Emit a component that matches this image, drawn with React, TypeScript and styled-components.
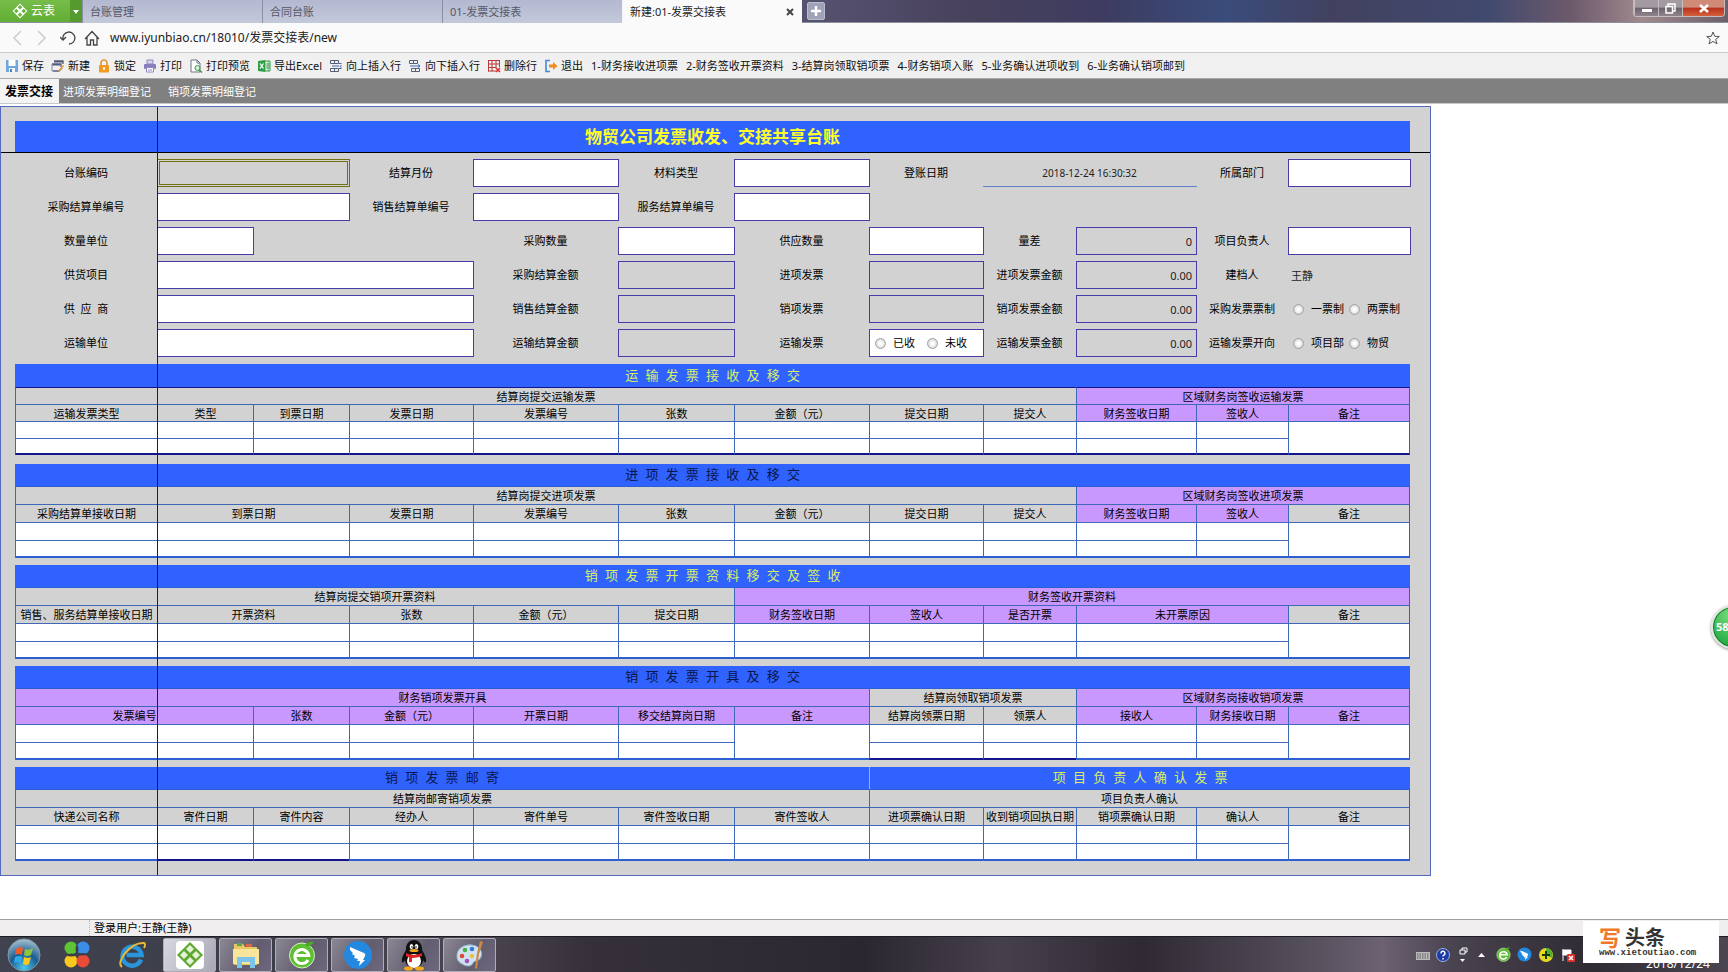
import React from "react";
import styled, { createGlobalStyle, css } from "styled-components";

const GlobalStyle = createGlobalStyle`
  * { box-sizing: border-box; }
  body {
    margin: 0;
    background: #fff;
    color: #000;
    font: 11px/16px "Noto Sans", "Noto Sans CJK SC", sans-serif;
  }
  button, input { font: inherit; color: inherit; }
  button { padding: 0; border: 0; background: none; white-space: nowrap; }
`;

const color = {
  band: "#2f62ff",
  sheet: "#d2d2d2",
  violet: "#c898ff",
  grid: "#4068b8",
  field: "#453ca8",
  edge: "#2e5fd0",
  navy: "#14148c",
};

/* ---------- window chrome ---------- */

const Page = styled.div`
  position: relative;
  display: flex;
  flex-direction: column;
  min-height: 100vh;
  overflow-x: hidden;
`;

const TitleBar = styled.header`
  display: flex;
  height: 23px;
  background: linear-gradient(90deg, #7d7aa0 0%, #54506e 48%, #48415c 56%, #3d3c60 64%, #3a4c7c 71%, #42415f 77%, #40496e 86%, #6d5a6c 91%, #a08a8e 95%, #6b5f68 100%);
  border-bottom: 1px solid #8d8f9c;
`;

const Brand = styled.button`
  display: flex;
  align-items: center;
  gap: 3px;
  width: 70px;
  padding-left: 12px;
  background: linear-gradient(#76bd49, #62ad35);
  color: #fff;
  font-size: 12px;
`;

const BrandMenu = styled.button`
  width: 12px;
  background: #559a2d;
  color: #fff;
  font-size: 8px;
`;

const Tabs = styled.nav`
  display: flex;
`;

const Tab = styled.button<{ $active?: boolean }>`
  display: flex;
  align-items: center;
  justify-content: space-between;
  width: 180px;
  height: 23px;
  padding: 0 8px 0 7px;
  border-left: 1px solid ${(p) => (p.$active ? "#f4f4f8" : "#8c8ea8")};
  background: ${(p) => (p.$active ? "#fafafa" : "linear-gradient(#b4b8d0, #c3c9da)")};
  color: ${(p) => (p.$active ? "#222" : "#555866")};
`;

const NewTab = styled.button`
  display: flex;
  align-items: center;
  justify-content: center;
  width: 18px;
  height: 18px;
  margin: 2px 5px;
  border: 1px solid #b9bccb;
  border-radius: 2px;
  background: #9fa2b8;
`;

const WindowButtons = styled.div`
  display: flex;
  height: 17px;
  margin-left: auto;
  margin-right: 3px;
  border: 1px solid #c4bcc0;
  border-top: 0;
  border-radius: 0 0 4px 4px;
  overflow: hidden;
`;

const WindowButton = styled.button<{ $close?: boolean }>`
  display: flex;
  align-items: center;
  justify-content: center;
  width: ${(p) => (p.$close ? 42 : 24)}px;
  border-left: 1px solid #c4bcc0;
  background: ${(p) =>
    p.$close ? "linear-gradient(#d08a78 45%, #b8301c 50%, #d4603c)" : "linear-gradient(#a39aa2 45%, #6c626c 50%, #90848c)"};
`;

const AddressBar = styled.div`
  display: flex;
  align-items: center;
  height: 30px;
  padding: 0 8px 0 12px;
  background: #fafafa;
  border-bottom: 1px solid #ccc;
`;

const NavButton = styled.button`
  display: flex;
  align-items: center;
  justify-content: center;
  width: 24px;
  height: 24px;
`;

const Address = styled.input`
  flex: 1;
  padding: 0 0 0 2px;
  border: 0;
  outline: 0;
  background: none;
  color: #222;
  font-size: 12px;
`;

const Toolbar = styled.div`
  display: flex;
  align-items: center;
  gap: 8px;
  height: 26px;
  padding: 1px 5px 0;
  background: #f0f0f0;
  border-bottom: 1px solid #a8a8a8;
`;

const ToolGroup = styled.div`
  display: flex;
  gap: 7px;
`;

const Tool = styled.button`
  display: flex;
  align-items: center;
  gap: 3px;
  color: #111;
  svg { flex: none; }
`;

const SheetTabs = styled.nav`
  display: flex;
  height: 25px;
  background: #808080;
  border-bottom: 1px solid #c8c8c8;
`;

const SheetTab = styled.button<{ $active?: boolean }>`
  height: 24px;
  color: #fff;
  padding: 2px 12px 0 4px;
  ${(p) =>
    p.$active &&
    css`
      padding: 2px 6px 0 5px;
      background: #f4f4f4;
      color: #000;
      font-size: 12px;
      font-weight: bold;
    `}
  & + & { min-width: 105px; text-align: left; }
`;

/* ---------- sheet ---------- */

const Workspace = styled.main`
  flex: 1;
  padding-top: 2px;
`;

const Sheet = styled.div`
  position: relative;
  width: max-content;
  padding-bottom: 7px;
  background: ${color.sheet};
  border: 1px solid #5568c0;
`;

const FreezeLine = styled.i`
  position: absolute;
  top: 0;
  bottom: 0;
  left: 156px;
  width: 1px;
  background: #1c1c3c;
`;

const SheetTitle = styled.div`
  padding: 14px 20px 0 14px;
  border-bottom: 1px solid #000;
`;

const SheetHeading = styled.h1`
  margin: 0;
  background: ${color.band};
  color: #ffff28;
  font-size: 17px;
  line-height: 31px;
  text-align: center;
`;

const SheetBody = styled.div`
  padding: 6px 20px 0 14px;
`;

const Form = styled.form`
  display: grid;
  grid-template-columns: 142px 96px 96px 124px 145px 116px 135px 114px 93px 120px 92px 122px;
  grid-auto-rows: 28px;
  row-gap: 6px;
  align-items: center;
  margin-bottom: 7px;
`;

const place = css<{ $row: number; $col: number; $span?: number }>`
  grid-row: ${(p) => p.$row};
  grid-column: ${(p) => p.$col} / span ${(p) => p.$span || 1};
`;

const Label = styled.label<{ $row: number; $col: number }>`
  ${place}
  text-align: center;
  white-space: pre;
`;

type FieldLook = "open" | "locked" | "current" | "underline" | "plain";

const looks: Record<FieldLook, ReturnType<typeof css>> = {
  open: css`background: #fff; border: 1px solid ${color.field};`,
  locked: css`background: none; border: 1px solid ${color.field}; text-align: right;`,
  current: css`background: none; border: 3px double #6f7012;`,
  underline: css`background: none; border: 0; border-bottom: 1px solid #5c80cc; text-align: center; font-size: 10px;`,
  plain: css`background: none; border: 0;`,
};

const Field = styled.input<{ $row: number; $col: number; $span?: number; $look: FieldLook }>`
  ${place}
  width: calc(100% + 1px);
  height: 28px;
  min-width: 0;
  padding: 0 4px 0 3px;
  border-radius: 0;
  outline: 0;
  color: #222;
  ${(p) => looks[p.$look]}
`;

const Choices = styled.div<{ $row: number; $col: number; $boxed?: boolean }>`
  ${place}
  display: flex;
  align-items: center;
  gap: ${(p) => (p.$boxed ? 12 : 5)}px;
  height: 28px;
  margin-right: -1px;
  padding-left: 5px;
  ${(p) => p.$boxed && looks.open}
`;

const Choice = styled.label`
  display: flex;
  align-items: center;
  gap: 7px;
  white-space: nowrap;
`;

const Radio = styled.input`
  appearance: none;
  width: 11px;
  height: 11px;
  margin: 0;
  border: 1px solid #a2a2a2;
  border-radius: 50%;
  background: radial-gradient(#fff 20%, #c4c4c4);
`;

/* ---------- tables ---------- */

const Grid = styled.table<{ $compact?: boolean }>`
  width: 0;
  min-width: 100%;
  margin-bottom: ${(p) => (p.$compact ? 9 : 7)}px;
  table-layout: fixed;
  border-spacing: 0;
  --band: ${(p) => (p.$compact ? 23 : 22)}px;
  --row: ${(p) => (p.$compact ? 17 : 18)}px;
  --edge: ${(p) => (p.$compact ? color.navy : color.edge)};
`;

const BandCell = styled.th<{ $dark?: boolean }>`
  height: var(--band);
  padding: 0;
  background: ${color.band};
  color: ${(p) => (p.$dark ? "#0a1648" : "#dcf060")};
  font: 13px/20px "Liberation Sans", "Noto Sans CJK SC", sans-serif;
  white-space: pre;
  & + & { border-left: 1px solid #9ab0f0; }
`;

const cellLines = css`
  height: var(--row);
  padding: 0;
  border-top: 1px solid ${color.grid};
  border-left: 1px solid ${color.grid};
  line-height: 15px;
`;

const HeadCell = styled.th<{ $violet?: boolean }>`
  ${cellLines}
  background: ${(p) => (p.$violet ? color.violet : color.sheet)};
  font-weight: normal;
  white-space: nowrap;
  &:last-child { border-right: 1px solid ${color.edge}; }
`;

const GroupCell = styled(HeadCell)`
  border-top-color: var(--edge);
`;

const DataCell = styled.td<{ $bottom?: boolean; $right?: boolean; $strong?: boolean }>`
  ${cellLines}
  background: #fff;
  ${(p) => p.$bottom && css`border-bottom: 2px solid ${p.$strong ? color.navy : "var(--edge)"};`}
  ${(p) => p.$right && css`border-right: 1px solid ${color.edge};`}
`;

/* ---------- status bar and task bar ---------- */

const StatusBar = styled.footer`
  display: flex;
  align-items: center;
  height: 17px;
  padding-left: 89px;
  background: #f0eeee;
  border-top: 1px solid #a0a0a0;
`;

const StatusText = styled.span`
  padding-left: 4px;
  border-left: 1px dotted #bbb;
`;

const TaskBar = styled.nav`
  display: flex;
  align-items: center;
  height: 36px;
  border-top: 1px solid #1c1c22;
  background: linear-gradient(90deg, #40434f 0%, #3c3d49 15%, #4a454f 28%, #35303a 34%, #2b2730 50%, #46404c 58%, #2e2933 66%, #57505d 76%, #6c6272 80%, #4a4350 84%, #2f2b33 92%, #4b4650 100%);
`;

const Launchers = styled.div`
  display: flex;
  align-items: center;
  gap: 18px;
  width: 163px;
  padding-left: 6px;
`;

const Launcher = styled.button`
  display: flex;
  width: 36px;
  justify-content: center;
`;

const Windows = styled.div`
  display: flex;
  gap: 3px;
`;

const TaskButton = styled.button<{ $active?: boolean }>`
  display: flex;
  align-items: center;
  justify-content: center;
  width: 53px;
  height: 34px;
  border: 1px solid #b0acb8;
  border-radius: 2px;
  background: ${(p) =>
    p.$active ? "linear-gradient(120deg, #d8d8e0, #a8a8b6)" : "linear-gradient(120deg, #8c8794, #625d6e 60%, #6e6880)"};
`;

const Tray = styled.div`
  display: flex;
  align-items: center;
  align-self: stretch;
  gap: 6px;
  margin-left: auto;
`;

const Clock = styled.time`
  align-self: flex-end;
  width: 76px;
  margin-right: 12px;
  margin-left: 58px;
  color: #fff;
  font-size: 12px;
  line-height: 16px;
  text-align: center;
`;

const Watermark = styled.a`
  position: absolute;
  right: 9px;
  bottom: 9px;
  width: 136px;
  height: 42px;
  padding: 6px 0 0 16px;
  background: #fff;
  color: #333;
  text-decoration: none;
`;

const WatermarkName = styled.strong`
  display: flex;
  align-items: center;
  gap: 4px;
  height: 21px;
  font-size: 20px;
  font-weight: 700;
  line-height: 21px;
`;

const WatermarkLead = styled.span`
  color: #f07828;
  font-size: 22px;
`;

const WatermarkSite = styled.span`
  display: block;
  font: bold 9px/10px "Liberation Mono", monospace;
`;

const SpeedBall = styled.button`
  position: absolute;
  top: 605px;
  right: -27px;
  width: 44px;
  height: 44px;
  padding-left: 3px;
  border: 2px solid #dfe6df;
  border-radius: 50%;
  background: radial-gradient(circle at 50% 20%, #7fe07f, #2fb24b 70%, #1f9a3c);
  box-shadow: 0 1px 3px #888, inset 0 0 0 1px #157a2c;
  color: #fff;
  font-size: 11px;
  font-weight: bold;
  text-align: left;
`;

/* ---------- icons ---------- */

const I = ({ children, size = 14, box = 14 }: { children: React.ReactNode; size?: number; box?: number }) => (
  <svg width={size} height={size} viewBox={`0 0 ${box} ${box}`} fill="none" aria-hidden="true">
    {children}
  </svg>
);

const icons = {
  save: <I><path d="M1 1h12v12H1z" fill="#6fa8dc" /><path d="M3.500 1h7v6h-7z" fill="#fff" /><path d="M4 9h6v4H4z" fill="#f4f8ff" /><path d="M5 10h2v3H5z" fill="#4a80bc" /></I>,
  create: <I><path d="M3 2h9v3M1 5h9v3M2 12h6l3-3" stroke="#555a78" strokeWidth="1.300" /><path d="M3 2h9v1.500H3zM1 5h8v1.500H1z" fill="#555a78" /><path d="M7 12l5-6 1 1-4.500 5.500z" fill="#f09838" /><path d="M1 5v7h5" stroke="#8088a8" /></I>,
  lock: <I><path d="M4 7V4a3 3 0 016 0v3" stroke="#e09838" strokeWidth="1.600" /><rect x="2" y="6" width="10" height="7.500" rx="1" fill="#f29a1f" /><path d="M7 8v3" stroke="#fff" strokeWidth="1.600" /></I>,
  print: <I><path d="M4 1h6v4H4z" fill="#d8d4ee" stroke="#8e88be" /><rect x="1" y="5" width="12" height="5" rx="1" fill="#8880bc" /><path d="M3.500 8.500h7v4.500h-7z" fill="#fff" stroke="#8e88be" /><path d="M5 11h4" stroke="#8e88be" /></I>,
  preview: <I><path d="M2 1h6l3 3v9H2z" fill="#fff" stroke="#6e7480" /><path d="M8 1v3h3" stroke="#6e7480" /><circle cx="8.500" cy="9" r="2.500" fill="#d8f0d8" stroke="#3a9a48" /><path d="M10 11l3 2.500" stroke="#3a9a48" strokeWidth="1.500" /></I>,
  excel: <I><path d="M8 2h5v10H8z" fill="#fff" stroke="#2e9a48" /><path d="M9 5h4M9 7h4M9 9h4M11 2v10" stroke="#2e9a48" strokeWidth=".8" /><path d="M1 2l7-1v12l-7-1z" fill="#2ea043" /><path d="M3 4.500l3.500 5M6.500 4.500l-3.500 5" stroke="#fff" strokeWidth="1.300" /></I>,
  above: <I><path d="M1.500 1.500h8v3h-8zM5.500 1.500v3M1.500 9.500h8v3h-8zM5.500 9.500v3" stroke="#566074" /><path d="M3 7h7M10 4.500h2.500M10 9.500h2.500M12.500 6L11 7.500l1.500 1" stroke="#3d6ab0" /></I>,
  below: <I><path d="M1.500 1.500h8v3h-8zM5.500 1.500v3M3.500 9.500h8v3h-8zM7.500 9.500v3" stroke="#566074" /><path d="M2 7h10M10 5.500L12 7l-2 1.500" stroke="#3d6ab0" /></I>,
  remove: <I><path d="M1 1.500h12M1 5h12M1 8.500h8M1 12h8M1.500 1v11.500M5 1v11.500M9 1v8M12.500 1v7" stroke="#b83a3a" /><path d="M9 9l4 4M13 9l-4 4" stroke="#e02828" strokeWidth="1.500" /></I>,
  exit: <I><path d="M6 1.500H2v11h4" stroke="#3f8ad8" strokeWidth="1.600" /><path d="M5 5.500h4V3l4.500 4L9 11V8.500H5z" fill="#f08c1e" /></I>,
};

const Lattice = ({ size, stroke, fill }: { size: number; stroke: string; fill: string }) => (
  <svg width={size} height={size} viewBox="0 0 28 28" aria-hidden="true">
    <path d="M14 1l13 13-13 13L1 14z" fill={stroke} />
    {[[14, 7.500], [7.500, 14], [20.500, 14], [14, 20.500]].map(([x, y]) => (
      <path key={`${x}${y}`} d={`M${x} ${y - 4}l4 4-4 4-4-4z`} fill={fill} />
    ))}
  </svg>
);

const StartOrb = () => (
  <svg width="34" height="34" viewBox="0 0 34 34" aria-hidden="true">
    <defs>
      <radialGradient id="orb" cx=".5" cy=".9" r=".9"><stop offset="0" stopColor="#4cc8f0" /><stop offset=".5" stopColor="#1c5c90" /><stop offset="1" stopColor="#a8c4d4" /></radialGradient>
    </defs>
    <circle cx="17" cy="17" r="16" fill="url(#orb)" stroke="#7f99a8" />
    <path d="M9 11q4-3 7-1l-1 7q-4-2-7 0z" fill="#ee5a28" />
    <path d="M18 11q4 2 8-1l-2 7q-4 2-7 0z" fill="#8cc63f" />
    <path d="M8 19q4-2 7 0l-1 6q-4-2-7 0z" fill="#2ea8e8" />
    <path d="M17 19q4 2 7 0l-2 7q-3 2-6 0z" fill="#fcc820" />
  </svg>
);

const Clover = () => (
  <svg width="30" height="30" viewBox="0 0 30 30" aria-hidden="true">
    <circle cx="8" cy="8" r="6.500" fill="#5fc434" />
    <circle cx="20" cy="8" r="6.500" fill="#3b8de8" />
    <circle cx="8" cy="21" r="6.500" fill="#f8c820" />
    <circle cx="20" cy="21" r="6.500" fill="#e84c38" />
    <path d="M14 4q-3 5 0 10 3-4 0-10z" fill="#3c3d49" />
    <path d="M3 15q5 3 11 0-5-3-11 0zM14 14q6 3 11 0-6-2-11 0z" fill="#3c3d49" />
  </svg>
);

const Explorer = () => (
  <svg width="30" height="30" viewBox="0 0 30 30" fill="none" aria-hidden="true">
    <path d="M24 19.500a9.500 9.500 0 11.5-4.500H9.500" stroke="#2b95dc" strokeWidth="4.500" />
    <path d="M5 27C-2 22 14 2 27 3q2 1 0 5" stroke="#e8b838" strokeWidth="2" />
  </svg>
);

const Folder = () => (
  <svg width="30" height="28" viewBox="0 0 30 28" aria-hidden="true">
    <path d="M3 3h9l2 3h12v18H3z" fill="#e8c860" />
    <path d="M6 2h5v3H6z" fill="#5aa860" /><path d="M15 3h6v3h-6z" fill="#d86848" />
    <path d="M2 8h26v15H2z" fill="#f8e49a" />
    <path d="M6 27V16h18v11h-5v-6h-8v6z" fill="#7cc4ec" />
  </svg>
);

const GreenE = ({ size }: { size: number }) => (
  <svg width={size} height={size} viewBox="0 0 28 28" fill="none" aria-hidden="true">
    <circle cx="14" cy="14.500" r="12.500" fill="#5cc030" stroke="#d8f0c8" />
    <path d="M20 19a7 7 0 11.8-4.500H8" stroke="#fff" strokeWidth="3" />
    <path d="M17 3q5-3 9-2-3 5-8 4z" fill="#4ca828" />
  </svg>
);

const Wing = ({ size }: { size: number }) => (
  <svg width={size} height={size} viewBox="0 0 30 30" aria-hidden="true">
    <circle cx="15" cy="15" r="14" fill="#2288e0" />
    <path d="M7 7l14 6q2 1 1 3l-2 4h2l-6 6 1-5h-3l1-2-4-1 1-2-3-2 1-1-3-3z" fill="#fff" />
  </svg>
);

const Penguin = () => (
  <svg width="28" height="32" viewBox="0 0 28 32" aria-hidden="true">
    <path d="M14 1c5 0 8 4 8 9 0 3 5 7 4 13-1 1-2 0-3-2 0 4-4 8-9 8s-9-4-9-8c-1 2-2 3-3 2-1-6 4-10 4-13 0-5 3-9 8-9z" fill="#111" />
    <ellipse cx="14" cy="22" rx="7" ry="7" fill="#fff" />
    <ellipse cx="11.500" cy="7.500" rx="1.800" ry="2.500" fill="#fff" /><ellipse cx="16.500" cy="7.500" rx="1.800" ry="2.500" fill="#fff" />
    <circle cx="12" cy="8" r=".8" /><circle cx="16" cy="8" r=".8" />
    <ellipse cx="14" cy="11.500" rx="4.500" ry="1.500" fill="#f4a81c" />
    <path d="M6 14q8 4 16 0v3q-5 2-10 2v4H9v-5q-2 0-3-1z" fill="#e02424" />
    <ellipse cx="8.500" cy="29.500" rx="4.500" ry="2" fill="#f4a81c" /><ellipse cx="19.500" cy="29.500" rx="4.500" ry="2" fill="#f4a81c" />
  </svg>
);

const Palette = () => (
  <svg width="32" height="32" viewBox="0 0 32 32" aria-hidden="true">
    <path d="M3 18C2 10 10 5 18 6s11 7 9 12-7 3-8 6-5 4-9 2-7-4-7-8z" fill="#cfe2f0" stroke="#8fb0c8" />
    <circle cx="8" cy="17" r="2.300" fill="#e04838" /><circle cx="11" cy="11" r="2.300" fill="#48b048" /><circle cx="18" cy="10" r="2.300" fill="#3878d8" /><circle cx="13" cy="22" r="2.300" fill="#a050c0" /><circle cx="18" cy="17" r="2" fill="#f0b828" />
    <path d="M26 2l3 1-4 12-2 15-2-1 2-15z" fill="#c88848" />
  </svg>
);

/* ---------- data ---------- */

type FieldSpec = { row: number; label: string; at: number; col: number; span?: number; look?: FieldLook; value?: string };

const fields: FieldSpec[] = [
  { row: 1, label: "台账编码", at: 1, col: 2, span: 2, look: "current" },
  { row: 1, label: "结算月份", at: 4, col: 5 },
  { row: 1, label: "材料类型", at: 6, col: 7 },
  { row: 1, label: "登账日期", at: 8, col: 9, span: 2, look: "underline", value: "2018-12-24 16:30:32" },
  { row: 1, label: "所属部门", at: 11, col: 12 },
  { row: 2, label: "采购结算单编号", at: 1, col: 2, span: 2 },
  { row: 2, label: "销售结算单编号", at: 4, col: 5 },
  { row: 2, label: "服务结算单编号", at: 6, col: 7 },
  { row: 3, label: "数量单位", at: 1, col: 2 },
  { row: 3, label: "采购数量", at: 5, col: 6 },
  { row: 3, label: "供应数量", at: 7, col: 8 },
  { row: 3, label: "量差", at: 9, col: 10, look: "locked", value: "0" },
  { row: 3, label: "项目负责人", at: 11, col: 12 },
  { row: 4, label: "供货项目", at: 1, col: 2, span: 3 },
  { row: 4, label: "采购结算金额", at: 5, col: 6, look: "locked" },
  { row: 4, label: "进项发票", at: 7, col: 8, look: "locked" },
  { row: 4, label: "进项发票金额", at: 9, col: 10, look: "locked", value: "0.00" },
  { row: 4, label: "建档人", at: 11, col: 12, look: "plain", value: "王静" },
  { row: 5, label: "供  应  商", at: 1, col: 2, span: 3 },
  { row: 5, label: "销售结算金额", at: 5, col: 6, look: "locked" },
  { row: 5, label: "销项发票", at: 7, col: 8, look: "locked" },
  { row: 5, label: "销项发票金额", at: 9, col: 10, look: "locked", value: "0.00" },
  { row: 6, label: "运输单位", at: 1, col: 2, span: 3 },
  { row: 6, label: "运输结算金额", at: 5, col: 6, look: "locked" },
  { row: 6, label: "运输发票金额", at: 9, col: 10, look: "locked", value: "0.00" },
];

const choices = [
  { row: 5, label: "采购发票票制", at: 11, col: 12, options: ["一票制", "两票制"] },
  { row: 6, label: "运输发票", at: 7, col: 8, options: ["已收", "未收"], boxed: true },
  { row: 6, label: "运输发票开向", at: 11, col: 12, options: ["项目部", "物贸"] },
];

/* [text, column span, violet] */
type Head = [string, number, boolean?];
type Section = {
  bands: { text: string; span: number; dark?: boolean }[];
  groups: Head[];
  heads: Head[];
  compact?: boolean;
  strong?: number[];
};

const sections: Section[] = [
  {
    bands: [{ text: "运输发票接收及移交", span: 12 }],
    groups: [["结算岗提交运输发票", 9], ["区域财务岗签收运输发票", 3, true]],
    heads: [["运输发票类型", 1], ["类型", 1], ["到票日期", 1], ["发票日期", 1], ["发票编号", 1], ["张数", 1], ["金额（元）", 1], ["提交日期", 1], ["提交人", 1], ["财务签收日期", 1, true], ["签收人", 1, true], ["备注", 1, true]],
    compact: true,
  },
  {
    bands: [{ text: "进项发票接收及移交", span: 12, dark: true }],
    groups: [["结算岗提交进项发票", 9], ["区域财务岗签收进项发票", 3, true]],
    heads: [["采购结算单接收日期", 1], ["到票日期", 2], ["发票日期", 1], ["发票编号", 1], ["张数", 1], ["金额（元）", 1], ["提交日期", 1], ["提交人", 1], ["财务签收日期", 1, true], ["签收人", 1, true], ["备注", 1]],
  },
  {
    bands: [{ text: "销项发票开票资料移交及签收", span: 12 }],
    groups: [["结算岗提交销项开票资料", 6], ["财务签收开票资料", 6, true]],
    heads: [["销售、服务结算单接收日期", 1], ["开票资料", 2], ["张数", 1], ["金额（元）", 1], ["提交日期", 1], ["财务签收日期", 1, true], ["签收人", 1, true], ["是否开票", 1, true], ["未开票原因", 2, true], ["备注", 1]],
  },
  {
    bands: [{ text: "销项发票开具及移交", span: 12, dark: true }],
    groups: [["财务销项发票开具", 7, true], ["结算岗领取销项发票", 2], ["区域财务岗接收销项发票", 3, true]],
    heads: [["发票编号", 2, true], ["张数", 1, true], ["金额（元）", 1, true], ["开票日期", 1, true], ["移交结算岗日期", 1, true], ["备注", 1, true], ["结算岗领票日期", 1], ["领票人", 1], ["接收人", 1, true], ["财务接收日期", 1, true], ["备注", 1, true]],
    strong: [6, 7],
  },
  {
    bands: [{ text: "销项发票邮寄", span: 7, dark: true }, { text: "项目负责人确认发票", span: 5 }],
    groups: [["结算岗邮寄销项发票", 7], ["项目负责人确认", 5]],
    heads: [["快递公司名称", 1], ["寄件日期", 1], ["寄件内容", 1], ["经办人", 1], ["寄件单号", 1], ["寄件签收日期", 1], ["寄件签收人", 1], ["进项票确认日期", 1], ["收到销项回执日期", 1], ["销项票确认日期", 1], ["确认人", 1], ["备注", 1]],
    strong: [1, 2],
  },
];

const columns = [142, 96, 96, 124, 145, 116, 135, 114, 93, 120, 92, 122];
const spaced = (text: string) => text.split("").join("  ");

function SectionTable({ section }: { section: Section }) {
  const { bands, groups, heads, compact, strong = [] } = section;
  const last = heads.length - 1;
  return (
    <Grid $compact={compact}>
      <colgroup>
        {columns.map((w, i) => <col key={i} width={w} />)}
      </colgroup>
      <thead>
        <tr>
          {bands.map((b) => <BandCell key={b.text} colSpan={b.span} $dark={b.dark}>{spaced(b.text)}</BandCell>)}
        </tr>
        <tr>
          {groups.map(([text, span, violet]) => <GroupCell key={text} colSpan={span} $violet={violet}>{text}</GroupCell>)}
        </tr>
        <tr>
          {heads.map(([text, span, violet], i) => <HeadCell key={i} colSpan={span} $violet={violet}>{text}</HeadCell>)}
        </tr>
      </thead>
      <tbody>
        <tr>
          {heads.map(([text, span], i) => (
            <DataCell key={i} colSpan={span} rowSpan={text === "备注" ? 2 : 1} $bottom={text === "备注"} $right={i === last} />
          ))}
        </tr>
        <tr>
          {heads.map(([text, span], i) =>
            text === "备注" ? null : <DataCell key={i} colSpan={span} $bottom $strong={strong.includes(i)} />
          )}
        </tr>
      </tbody>
    </Grid>
  );
}

const tools: [React.ReactNode, string][] = [
  [icons.save, "保存"], [icons.create, "新建"], [icons.lock, "锁定"], [icons.print, "打印"], [icons.preview, "打印预览"],
  [icons.excel, "导出Excel"], [icons.above, "向上插入行"], [icons.below, "向下插入行"], [icons.remove, "删除行"], [icons.exit, "退出"],
];
const steps = ["1-财务接收进项票", "2-财务签收开票资料", "3-结算岗领取销项票", "4-财务销项入账", "5-业务确认进项收到", "6-业务确认销项邮到"];

export default function App() {
  return (
    <Page>
      <GlobalStyle />
      <TitleBar>
        <Brand><Lattice size={16} stroke="#fff" fill="#6ab43e" />云表</Brand>
        <BrandMenu aria-label="菜单">
          <svg width="6" height="4" viewBox="0 0 6 4" aria-hidden="true"><path d="M0 0h6L3 4z" fill="#fff" /></svg>
        </BrandMenu>
        <Tabs>
          <Tab>台账管理</Tab>
          <Tab>合同台账</Tab>
          <Tab>01-发票交接表</Tab>
          <Tab $active>
            新建:01-发票交接表
            <svg width="8" height="8" viewBox="0 0 8 8" aria-hidden="true"><path d="M1 1l6 6M7 1L1 7" stroke="#444" strokeWidth="2" /></svg>
          </Tab>
        </Tabs>
        <NewTab aria-label="新标签页">
          <svg width="10" height="10" viewBox="0 0 10 10" aria-hidden="true"><path d="M5 0v10M0 5h10" stroke="#fff" strokeWidth="2.500" /></svg>
        </NewTab>
        <WindowButtons>
          <WindowButton aria-label="最小化"><svg width="10" height="8" viewBox="0 0 10 8"><path d="M0 5h10v3H0z" fill="#fff" /></svg></WindowButton>
          <WindowButton aria-label="还原"><svg width="11" height="11" viewBox="0 0 11 11" fill="none"><path d="M3 3V1h7v7H8M1 3.500h6.500V10H1z" stroke="#fff" strokeWidth="1.500" /></svg></WindowButton>
          <WindowButton $close aria-label="关闭"><svg width="10" height="9" viewBox="0 0 10 9"><path d="M1 1l8 7M9 1L1 8" stroke="#fff" strokeWidth="2.500" /></svg></WindowButton>
        </WindowButtons>
      </TitleBar>

      <AddressBar>
        <NavButton aria-label="后退"><svg width="24" height="16" viewBox="0 0 24 16" fill="none"><path d="M9 1L2 8l7 7" stroke="#ccc" strokeWidth="1.500" /></svg></NavButton>
        <NavButton aria-label="前进"><svg width="24" height="16" viewBox="0 0 24 16" fill="none"><path d="M2 1l7 7-7 7" stroke="#ccc" strokeWidth="1.500" /></svg></NavButton>
        <NavButton aria-label="刷新"><svg width="24" height="16" viewBox="0 0 24 16" fill="none"><path d="M0 7l3 3 3-3M3 9a6 6 0 116 5" stroke="#444" strokeWidth="1.300" /></svg></NavButton>
        <NavButton aria-label="主页"><svg width="24" height="16" viewBox="0 0 24 16" fill="none"><path d="M1 9l7-7.500L15 9M3 7.500V15h3.500v-5h3v5H13V7.500" stroke="#444" strokeWidth="1.300" /></svg></NavButton>
        <Address aria-label="地址" defaultValue="www.iyunbiao.cn/18010/发票交接表/new" />
        <svg width="14" height="14" viewBox="0 0 14 14" fill="none" aria-hidden="true"><path d="M7 1l1.700 4.300 4.600.2-3.600 2.900 1.300 4.500L7 10.400l-4 2.500 1.300-4.500L.7 5.500l4.600-.2z" stroke="#555" /></svg>
      </AddressBar>

      <Toolbar>
        <ToolGroup>
          {tools.map(([icon, text]) => <Tool key={text}>{icon}{text}</Tool>)}
        </ToolGroup>
        {steps.map((text) => <Tool key={text}>{text}</Tool>)}
      </Toolbar>

      <SheetTabs>
        <SheetTab $active>发票交接</SheetTab>
        <SheetTab>进项发票明细登记</SheetTab>
        <SheetTab>销项发票明细登记</SheetTab>
      </SheetTabs>

      <Workspace>
        <Sheet>
          <SheetTitle><SheetHeading>物贸公司发票收发、交接共享台账</SheetHeading></SheetTitle>
          <SheetBody>
            <Form>
              {fields.map((f) => {
                const id = `field-${f.row}-${f.col}`;
                const look = f.look || "open";
                return (
                  <React.Fragment key={id}>
                    <Label $row={f.row} $col={f.at} htmlFor={id}>{f.label}</Label>
                    <Field id={id} $row={f.row} $col={f.col} $span={f.span} $look={look} readOnly={look !== "open"} defaultValue={f.value} />
                  </React.Fragment>
                );
              })}
              {choices.map((c) => {
                const id = `choice-${c.row}-${c.col}`;
                return (
                  <React.Fragment key={id}>
                    <Label as="span" id={id} $row={c.row} $col={c.at}>{c.label}</Label>
                    <Choices role="radiogroup" aria-labelledby={id} $row={c.row} $col={c.col} $boxed={c.boxed}>
                      {c.options.map((o) => <Choice key={o}><Radio type="radio" name={id} />{o}</Choice>)}
                    </Choices>
                  </React.Fragment>
                );
              })}
            </Form>
            {sections.map((s) => <SectionTable key={s.bands[0].text} section={s} />)}
          </SheetBody>
          <FreezeLine />
        </Sheet>
      </Workspace>

      <StatusBar><StatusText>登录用户:王静(王静)</StatusText></StatusBar>
      <TaskBar>
        <Launchers>
          <Launcher aria-label="开始"><StartOrb /></Launcher>
          <Launcher aria-label="软件管家"><Clover /></Launcher>
          <Launcher aria-label="浏览器"><Explorer /></Launcher>
        </Launchers>
        <Windows>
          <TaskButton $active aria-label="云表">
            <svg width="30" height="30" viewBox="0 0 30 30" aria-hidden="true">
              <rect x="1" y="1" width="28" height="28" rx="4" fill="#fff" />
              <path d="M15 2l13 13-13 13L2 15z" fill="#5ea832" />
              <path d="M15 5l4 4-4 4-4-4zM9 11l4 4-4 4-4-4zM21 11l4 4-4 4-4-4zM15 17l4 4-4 4-4-4z" fill="#e4f2d8" />
            </svg>
          </TaskButton>
          <TaskButton aria-label="文件夹"><Folder /></TaskButton>
          <TaskButton aria-label="安全浏览器"><GreenE size={28} /></TaskButton>
          <TaskButton aria-label="钉钉"><Wing size={30} /></TaskButton>
          <TaskButton aria-label="QQ"><Penguin /></TaskButton>
          <TaskButton aria-label="画图"><Palette /></TaskButton>
        </Windows>
        <Tray>
          <svg width="14" height="14" viewBox="0 0 14 14" aria-hidden="true"><path d="M0 4h14v8H0z" fill="#bbb" /><path d="M1 6h12M1 8h12M1 10h12" stroke="#555" strokeDasharray="1.500 1" /></svg>
          <svg width="14" height="14" viewBox="0 0 14 14" fill="none" aria-hidden="true"><circle cx="7" cy="7" r="6.500" fill="#1c3aa8" stroke="#9fb0e0" /><path d="M5 5.500a2 2 0 113 1.500q-1 .5-1 1.500M7 10v1.500" stroke="#fff" strokeWidth="1.500" /></svg>
          <svg width="14" height="16" viewBox="0 0 14 16" fill="none" aria-hidden="true"><path d="M6 3V1h5v4H9M4 3h5v4H4z" stroke="#fff" /><path d="M4 12h5l-2.500 3z" fill="#fff" /></svg>
          <svg width="14" height="8" viewBox="0 0 14 8" aria-hidden="true"><path d="M2 6h7L5.500 2z" fill="#fff" /></svg>
          <GreenE size={15} />
          <Wing size={15} />
          <svg width="16" height="16" viewBox="0 0 16 16" aria-hidden="true"><circle cx="8" cy="8" r="7" fill="#e4d820" /><path d="M8 1a7 7 0 016 10l-6-3z" fill="#50b030" /><path d="M8 4v8M4 8h8" stroke="#183808" strokeWidth="2" /></svg>
          <svg width="16" height="16" viewBox="0 0 16 16" aria-hidden="true"><path d="M3 2v12M3 3h8v5H3z" fill="#fff" stroke="#fff" /><rect x="7" y="7" width="8" height="8" rx="1" fill="#d83028" /><path d="M9 9l4 4M13 9l-4 4" stroke="#fff" strokeWidth="1.500" /></svg>
          <Clock dateTime="2018-12-24">2018/12/24</Clock>
        </Tray>
      </TaskBar>

      <Watermark href="#">
        <WatermarkName><WatermarkLead>写</WatermarkLead>头条</WatermarkName>
        <WatermarkSite>www.xietoutiao.com</WatermarkSite>
      </Watermark>
      <SpeedBall aria-label="加速球">58</SpeedBall>
    </Page>
  );
}
